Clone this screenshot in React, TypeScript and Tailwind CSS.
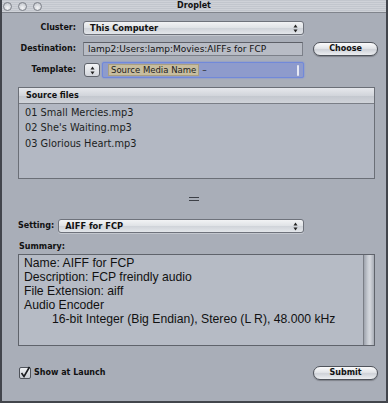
import React from "react";

const UI = { fontFamily: '"DejaVu Sans", sans-serif' };
const HELV = { fontFamily: '"Liberation Sans", Arial, sans-serif' };

function Arrows() {
    return (
        <svg width="5" height="9" viewBox="0 0 5 9" className="shrink-0">
            <path d="M2.5 0.5 L4.5 3.5 L0.5 3.5 Z" fill="#222" />
            <path d="M2.5 8.5 L4.5 5.5 L0.5 5.5 Z" fill="#222" />
        </svg>
    );
}

function Popup({ label, width }: { label: string; width: string }) {
    return (
        <div
            className={`${width} h-[14px] flex items-center justify-between pl-[6px] pr-[5px] rounded-[3px] border border-[#6e727b] bg-[linear-gradient(#f2f3f5,#dfe2e6_50%,#cfd3d9_51%,#e3e6ea)] shadow-[0_1px_0_#c3c7ce]`}
        >
            <span className="text-[8.3px] font-bold text-[#111] leading-none" style={UI}>
                {label}
            </span>
            <Arrows />
        </div>
    );
}

function PillButton({ label }: { label: string }) {
    return (
        <div className="w-[65px] h-[14px] flex items-center justify-center rounded-full border border-[#4f535b] bg-[linear-gradient(#fbfbfc,#e2e4e8_45%,#cfd2d8_55%,#eceef1)] shadow-[0_1px_1px_rgba(0,0,0,0.25)]">
            <span className="text-[8px] font-bold text-[#111] leading-none" style={UI}>
                {label}
            </span>
        </div>
    );
}

function Label({ children }: { children: React.ReactNode }) {
    return (
        <span className="w-[74px] text-right text-[8px] font-bold text-[#111] leading-none shrink-0" style={UI}>
            {children}
        </span>
    );
}

const files = ["01 Small Mercies.mp3", "02 She's Waiting.mp3", "03 Glorious Heart.mp3"];

const summary = [
    "Name: AIFF for FCP",
    "Description: FCP freindly audio",
    "File Extension: aiff",
    "Audio Encoder",
];

export default function App() {
    return (
        <div className="w-[388px] h-[403px] flex flex-col bg-[#a9aeb8] border-x-2 border-b-2 border-[#42454c] overflow-hidden">
            {/* title bar */}
            <div className="h-[13px] shrink-0 flex items-center relative border-b border-[#80848c] bg-[repeating-linear-gradient(0deg,#cfd2d8_0px,#cfd2d8_1px,#c2c6cd_1px,#c2c6cd_2px)]">
                <div className="flex items-center gap-[6px] pl-[1px]">
                    {[0, 1, 2].map((i) => (
                        <span
                            key={i}
                            className="w-[9px] h-[9px] rounded-full border border-[#7d8189] bg-[radial-gradient(circle_at_50%_70%,#f4f5f7,#b9bdc4)]"
                        />
                    ))}
                </div>
                <span
                    className="absolute left-0 right-0 text-center text-[8px] font-bold text-[#111] leading-none"
                    style={UI}
                >
                    Droplet
                </span>
            </div>

            {/* cluster */}
            <div className="flex items-center gap-[7px] mt-[8px]">
                <Label>Cluster:</Label>
                <Popup label="This Computer" width="w-[221px]" />
            </div>

            {/* destination */}
            <div className="flex items-center gap-[7px] mt-[7px]">
                <Label>Destination:</Label>
                <div className="w-[220px] h-[14px] flex items-center pl-[4px] border border-[#7c8089] border-t-[#5d6068] bg-[#b8bcc5]">
                    <span className="text-[9px] text-[#111] leading-none" style={UI}>
                        lamp2:Users:lamp:Movies:AIFFs for FCP
                    </span>
                </div>
                <div className="ml-[3px]">
                    <PillButton label="Choose" />
                </div>
            </div>

            {/* template */}
            <div className="flex items-center mt-[6px]">
                <Label>Template:</Label>
                <div className="ml-[8px] w-[16px] h-[14px] flex items-center justify-center rounded-[3px] border border-[#5f636b] bg-[linear-gradient(#f4f5f7,#d3d6dc)]">
                    <Arrows />
                </div>
                <div className="ml-[2px] w-[202px] h-[16px] flex items-center pl-[5px] pr-[4px] rounded-[2px] border border-[#7189da] bg-[#8e9bcc] shadow-[0_0_2px_#6f86e0]">
                    <span
                        className="h-[12px] flex items-center px-[2px] bg-[#c7bd9f] border border-[#a99f82] text-[8.5px] text-[#222] leading-none"
                        style={UI}
                    >
                        Source Media Name
                    </span>
                    <span className="ml-[3px] text-[9px] text-[#222] leading-none" style={UI}>
                        –
                    </span>
                    <span className="ml-auto w-[2px] h-[11px] rounded-full bg-[#e7eaf5]" />
                </div>
            </div>

            {/* source files list */}
            <div className="ml-[16px] mt-[9px] w-[357px] h-[92px] flex flex-col border border-[#6b6f77] bg-[#b3b8c3]">
                <div className="h-[16px] shrink-0 flex items-center pl-[7px] border-b border-[#7a7e86] bg-[linear-gradient(#e6e8ec,#d2d5db_50%,#c3c7ce_51%,#d0d3d9)]">
                    <span className="text-[8px] font-bold text-[#111] leading-none" style={UI}>
                        Source files
                    </span>
                </div>
                <div className="flex flex-col pt-[1px]">
                    {files.map((f) => (
                        <div key={f} className="h-[15.5px] flex items-center pl-[6px]">
                            <span className="text-[9.8px] text-[#1c1e22] leading-none" style={UI}>
                                {f}
                            </span>
                        </div>
                    ))}
                </div>
            </div>

            {/* splitter */}
            <div className="h-[40px] flex flex-col items-center justify-center gap-[2px]">
                <span className="w-[10px] h-[1px] bg-[#3d4047]" />
                <span className="w-[10px] h-[1px] bg-[#3d4047]" />
            </div>

            {/* setting */}
            <div className="flex items-center gap-[4px] ml-[16px]">
                <span className="text-[8px] font-bold text-[#111] leading-none" style={UI}>
                    Setting:
                </span>
                <Popup label="AIFF for FCP" width="w-[246px]" />
            </div>

            <span className="ml-[17px] mt-[10px] text-[8px] font-bold text-[#111] leading-none" style={UI}>
                Summary:
            </span>

            {/* summary box */}
            <div className="ml-[16px] mt-[3px] w-[357px] h-[92px] flex border border-[#5f636b] bg-[#b6bbc5]">
                <div className="flex-1 flex flex-col pl-[5px] pt-[1px] text-[12.2px] leading-[14px] text-[#111]" style={HELV}>
                    {summary.map((s) => (
                        <span key={s}>{s}</span>
                    ))}
                    <span className="pl-[28px]">16-bit Integer (Big Endian), Stereo (L R), 48.000 kHz</span>
                </div>
                <div className="w-[11px] border-l border-[#7a7e86] bg-[linear-gradient(90deg,#9ea3ad,#c9cdd4_40%,#d4d7dd_60%,#a7acb5)]" />
            </div>

            {/* bottom row */}
            <div className="flex items-center mt-[20px] ml-[17px] mr-[8px]">
                <div className="w-[12px] h-[12px] flex items-center justify-center rounded-[2px] border border-[#4e525a] bg-[linear-gradient(#eef0f3,#c8ccd3)]">
                    <svg width="10" height="10" viewBox="0 0 10 10" className="overflow-visible">
                        <path d="M1.5 5 L4 8.5 L9.5 -1" fill="none" stroke="#1a1c20" strokeWidth="1.6" />
                    </svg>
                </div>
                <span className="ml-[3px] text-[8px] font-bold text-[#111] leading-none" style={UI}>
                    Show at Launch
                </span>
                <div className="ml-auto">
                    <PillButton label="Submit" />
                </div>
            </div>
        </div>
    );
}
